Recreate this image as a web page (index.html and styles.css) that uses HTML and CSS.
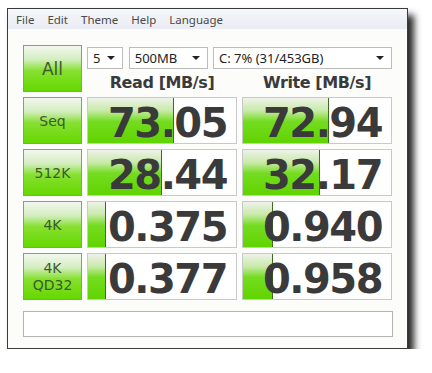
FILE: index.html
```html
<!DOCTYPE html>
<html lang="en">
<head>
    <meta charset="UTF-8">
    <title>CrystalDiskMark</title>
    <link rel="stylesheet" href="styles.css">
</head>
<body>

    <div class="finestra">
        <div class="menu">
            <span>File</span>
            <span>Edit</span>
            <span>Theme</span>
            <span>Help</span>
            <span>Language</span>
        </div>

        <div class="contenuto">
            <div class="griglia">
                <div class="bottone grande">All</div>
                <div class="testa">
                    <div class="scelte">
                        <div class="scelta s-num"><span>5</span><i></i></div>
                        <div class="scelta s-size"><span>500MB</span><i></i></div>
                        <div class="scelta s-disk"><span>C: 7% (31/453GB)</span><i></i></div>
                    </div>
                    <div class="titoli">
                        <div>Read [MB/s]</div>
                        <div>Write [MB/s]</div>
                    </div>
                </div>

                <div class="bottone">Seq</div>
                <div class="valore"><div class="barra" style="width: 85px"></div><span>73.05</span></div>
                <div class="valore"><div class="barra" style="width: 85px"></div><span>72.94</span></div>

                <div class="bottone">512K</div>
                <div class="valore"><div class="barra" style="width: 73px"></div><span>28.44</span></div>
                <div class="valore"><div class="barra" style="width: 76px"></div><span>32.17</span></div>

                <div class="bottone">4K</div>
                <div class="valore"><div class="barra" style="width: 17px"></div><span>0.375</span></div>
                <div class="valore"><div class="barra" style="width: 29px"></div><span>0.940</span></div>

                <div class="bottone due">4K<br>QD32</div>
                <div class="valore"><div class="barra" style="width: 17px"></div><span>0.377</span></div>
                <div class="valore"><div class="barra" style="width: 29px"></div><span>0.958</span></div>
            </div>

            <div class="commento"></div>
        </div>
    </div>

</body>
</html>
```

FILE: styles.css
```css
body {
    margin: 0;
    padding: 0;
    background-color: white;
    font-family: "DejaVu Sans", sans-serif;
}

.finestra {
    margin: 8px 0 0 7px;
    width: 399px;
    height: 339px;
    border: 1px solid #3a3a3a;
    background-color: #fcfcfa;
    box-shadow: 6px 7px 7px rgba(0, 0, 0, 0.85);
}

.menu {
    height: 20px;
    display: flex;
    align-items: center;
    gap: 13px;
    padding-left: 8px;
    background: linear-gradient(#f6f7fa, #e9ecf2);
    font-family: "Noto Sans", sans-serif;
    font-size: 11.5px;
    color: #4a4a4a;
}

.contenuto {
    padding: 16px 0 0 15px;
}

.griglia {
    display: grid;
    grid-template-columns: 59px 150px 150px;
    grid-auto-rows: 47px;
    column-gap: 5px;
    row-gap: 5px;
}

.bottone {
    box-sizing: border-box;
    border: 1px solid #8c9a84;
    background: linear-gradient(#f3f7ef 0%, #d4eec0 30%, #86e030 55%, #66d800 100%);
    color: #3c5a2c;
    font-size: 14px;
    display: flex;
    align-items: center;
    justify-content: center;
    text-align: center;
}

.grande {
    font-size: 17px;
}

.due {
    line-height: 17px;
    font-size: 14px;
}

.testa {
    grid-column: 2 / 4;
    display: flex;
    flex-direction: column;
}

.scelte {
    display: flex;
    gap: 5px;
    margin-top: 2px;
}

.scelta {
    box-sizing: border-box;
    height: 22px;
    border: 1px solid #bcbcbc;
    background-color: white;
    display: flex;
    align-items: center;
    justify-content: space-between;
    padding: 0 7px 0 5px;
    font-family: "Noto Sans", sans-serif;
    font-size: 13px;
    color: #222;
}

.scelta i {
    width: 0;
    height: 0;
    border-left: 4px solid transparent;
    border-right: 4px solid transparent;
    border-top: 4px solid #222;
}

.s-num {
    width: 36px;
}

.s-size {
    width: 80px;
    margin-left: 1px;
}

.s-disk {
    width: 181px;
}

.titoli {
    display: flex;
    gap: 5px;
    margin-top: 4px;
}

.titoli div {
    width: 150px;
    text-align: center;
    font-weight: bold;
    font-size: 16px;
    letter-spacing: -0.4px;
    color: #3a3a3a;
}

.valore {
    position: relative;
    box-sizing: border-box;
    border: 1px solid #c9c9c9;
    background-color: white;
    display: flex;
    align-items: center;
    justify-content: flex-end;
    padding-right: 9px;
}

.barra {
    position: absolute;
    left: 0;
    top: 0;
    bottom: 0;
    background: linear-gradient(#eef2ea 0%, #c8eaa8 28%, #74dc20 52%, #60d400 100%);
    border-right: 1px solid #3f6a22;
}

.valore span {
    position: relative;
    font-size: 40px;
    font-weight: bold;
    letter-spacing: -1.5px;
    color: #3a3a3a;
    line-height: 1;
    margin-top: 4px;
}

.commento {
    box-sizing: border-box;
    margin-top: 11px;
    width: 370px;
    height: 26px;
    border: 1px solid #b4b4b4;
    background-color: white;
}
```
